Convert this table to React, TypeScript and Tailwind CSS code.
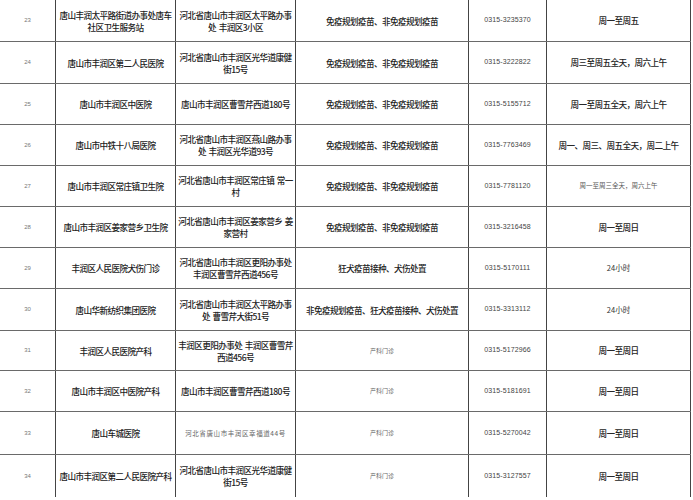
import React from "react";

type Row = {
  h: string;
  no: string;
  name: React.ReactNode;
  addr: React.ReactNode;
  addrCls?: string;
  svc: string;
  svcCls?: string;
  tel: string;
  hours: string;
  hoursCls?: string;
  last?: boolean;
};

const V = "免疫规划疫苗、非免疫规划疫苗";
const main = "text-[8.6px] tracking-[-0.6px] font-medium text-[#222]";
const small = "text-[6px] text-[#666]";
const h24 = "text-[7.5px] text-[#333]";

const rows: Row[] = [
  { h: "h-[42px]", no: "23", name: <>唐山丰润太平路街道办事处唐车<br />社区卫生服务站</>, addr: <>河北省唐山市丰润区太平路办事<br />处&nbsp;&nbsp;丰润区3小区</>, svc: V, tel: "0315-3235370", hours: "周一至周五" },
  { h: "h-[42px]", no: "24", name: "唐山市丰润区第二人民医院", addr: <>河北省唐山市丰润区光华道康健<br />街15号</>, svc: V, tel: "0315-3222822", hours: "周三至周五全天，周六上午" },
  { h: "h-[41px]", no: "25", name: "唐山市丰润区中医院", addr: "唐山市丰润区曹雪芹西道180号", svc: V, tel: "0315-5155712", hours: "周一至周五全天，周六上午" },
  { h: "h-[41px]", no: "26", name: "唐山市中铁十八局医院", addr: <>河北省唐山市丰润区燕山路办事<br />处&nbsp;&nbsp;丰润区光华道93号</>, svc: V, tel: "0315-7763469", hours: "周一、周三、周五全天，周二上午" },
  { h: "h-[41px]", no: "27", name: "唐山市丰润区常庄镇卫生院", addr: <>河北省唐山市丰润区常庄镇&nbsp;&nbsp;常一<br />村</>, svc: V, tel: "0315-7781120", hours: "周一至周三全天，周六上午", hoursCls: "text-[6.5px] text-[#555]" },
  { h: "h-[41px]", no: "28", name: "唐山市丰润区姜家营乡卫生院", addr: <>河北省唐山市丰润区姜家营乡&nbsp;&nbsp;姜<br />家营村</>, svc: V, tel: "0315-3216458", hours: "周一至周日" },
  { h: "h-[41px]", no: "29", name: "丰润区人民医院犬伤门诊", addr: <>河北省唐山市丰润区更阳办事处<br />丰润区曹雪芹西道456号</>, svc: "狂犬疫苗接种、犬伤处置", tel: "0315-5170111", hours: "24小时", hoursCls: h24 },
  { h: "h-[42px]", no: "30", name: "唐山华新纺织集团医院", addr: <>河北省唐山市丰润区太平路办事<br />处&nbsp;&nbsp;曹雪芹大街51号</>, svc: "非免疫规划疫苗、狂犬疫苗接种、犬伤处置", tel: "0315-3313112", hours: "24小时", hoursCls: h24 },
  { h: "h-[40px]", no: "31", name: "丰润区人民医院产科", addr: <>丰润区更阳办事处&nbsp;&nbsp;丰润区曹雪芹<br />西道456号</>, svc: "产科门诊", svcCls: small, tel: "0315-5172966", hours: "周一至周日" },
  { h: "h-[41px]", no: "32", name: "唐山市丰润区中医院产科", addr: "唐山市丰润区曹雪芹西道180号", svc: "产科门诊", svcCls: small, tel: "0315-5181691", hours: "周一至周日" },
  { h: "h-[43px]", no: "33", name: "唐山车城医院", addr: "河北省唐山市丰润区幸福道44号", addrCls: "text-[6.5px] text-[#666] tracking-[0.6px]", svc: "产科门诊", svcCls: small, tel: "0315-5270042", hours: "周一至周日" },
  { h: "h-[42px]", no: "34", name: "唐山市丰润区第二人民医院产科", addr: <>河北省唐山市丰润区光华道康健<br />街15号</>, svc: "产科门诊", svcCls: small, tel: "0315-3127557", hours: "周一至周日", last: true },
];

const cjk = "font-['Noto_Sans_CJK_SC','Noto_Sans',sans-serif]";

export default function App() {
  return (
    <div className="w-[693px] h-[500px] bg-white overflow-hidden">
      <div className="w-[691px] flex flex-col">
        {rows.map((r) => (
          <div
            key={r.no}
            className={`grid grid-cols-[56px_120px_120px_173px_78px_144px] ${r.h} ${r.last ? "" : "border-b border-[#6a6a6a]"}`}
          >
            <div className="flex items-center justify-center border-r border-[#444] text-[6px] text-[#777] font-['Liberation_Sans',sans-serif]">
              {r.no}
            </div>
            <div className={`flex items-center justify-center text-center border-r border-[#444] leading-[12px] whitespace-nowrap ${cjk} ${main}`}>
              <span>{r.name}</span>
            </div>
            <div className={`flex items-center justify-center text-center border-r border-[#444] leading-[12px] whitespace-nowrap ${cjk} ${r.addrCls ?? main}`}>
              <span>{r.addr}</span>
            </div>
            <div className={`flex items-center justify-center text-center border-r border-[#444] leading-[12px] whitespace-nowrap ${cjk} ${r.svcCls ?? main}`}>
              {r.svc}
            </div>
            <div className="flex items-center justify-center border-r border-[#444] text-[7px] text-[#444] font-['Liberation_Sans',sans-serif] tracking-[0.1px]">
              {r.tel}
            </div>
            <div className={`flex items-center justify-center border-r border-[#444] whitespace-nowrap ${cjk} ${r.hoursCls ?? main}`}>
              {r.hours}
            </div>
          </div>
        ))}
      </div>
    </div>
  );
}
